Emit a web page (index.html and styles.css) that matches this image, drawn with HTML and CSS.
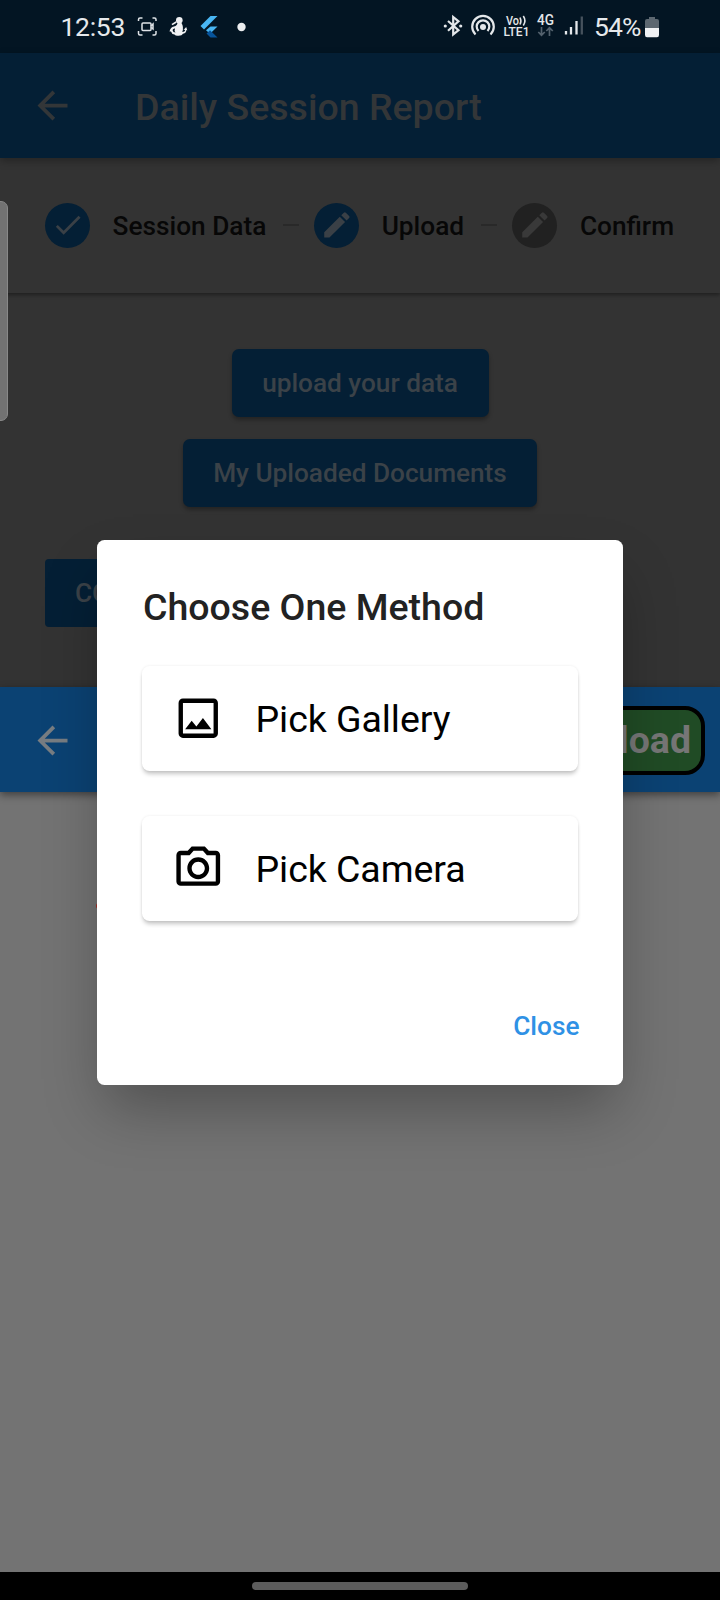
FILE: index.html
```html
<!DOCTYPE html>
<html lang="en">
<head>
<meta charset="utf-8">
<title>Daily Session Report</title>
<link rel="stylesheet" href="styles.css">
</head>
<body>
<div class="screen">
  <div class="status">
    <span class="clock">12:53</span>
    <svg class="status-icons-left" viewBox="0 0 115 26" width="115" height="26">
      <g fill="none" stroke="#dfe3e7" stroke-width="1.5">
        <path d="M1.5 6V4.500Q1.500 3 3 3H5.500M15.500 3H17.500Q19 3 19 4.500V6M19 16V18.500Q19 20 17.500 20H15.500M5.500 20H3Q1.500 20 1.500 18.500V16"/>
        <rect x="5" y="8" width="9" height="7.500" rx="1"/><path d="M14 11L16 9V14L14 12.500"/>
      </g>
      <g fill="#f0f1f3">
        <circle cx="42.300" cy="5.300" r="3.300"/>
        <path d="M40.500 7.500L44.500 8Q47 12 45.300 17Q48.500 16.500 48 14.800L46.500 15L49.200 12L50.300 15.500L49.300 15Q49.500 18 46 18.800Q45 21 41 20.800Q38.500 21 37.500 19.500Q34.500 19 34 16.500L32.500 16.500Q33.500 12 37 11.500Q40.500 10.500 40.500 7.500Z"/>
        <path d="M34.500 9L39.300 6L39.600 7.800L35.500 10.300Z"/>
      </g>
      <path d="M35.500 15Q36.500 13 38 13.500Q37 15.500 38.500 17.500Q36 17.500 35.500 15" fill="#041522"/>
      <path d="M73.500 1H80.500L67 14.500L63.500 11Z" fill="#49b6f3"/>
      <path d="M73.500 11.500H80.500L73 18.700L69 15.300Z" fill="#49b6f3"/>
      <path d="M69.500 18.500L73 15.300L80.500 22.500H73.500Z" fill="#07549b"/>
      <circle cx="104.500" cy="12" r="4.200" fill="#eceef0"/>
    </svg>
    <svg class="status-icons-right" viewBox="0 0 146 26" width="146" height="26">
      <g fill="none" stroke="#e4e7ea" stroke-width="2.200">
        <path d="M5 7L15.500 16.200L10.200 20.500V3L15.500 7.300L5 16.800"/>
        <path d="M32.500 20.500A10.800 10.800 0 1 1 47.500 20.500"/>
        <path d="M35.500 17A6.300 6.300 0 1 1 44.500 17"/>
      </g>
      <g fill="#e4e7ea"><circle cx="2.300" cy="12" r="1.600"/><circle cx="17.700" cy="12" r="1.600"/><circle cx="40" cy="13" r="3"/></g>
      <text x="63" y="10.500" class="tiny" textLength="13" lengthAdjust="spacingAndGlyphs">Vo</text>
      <path d="M77 3.500Q78.800 7 77 10.500M80.300 2Q83.500 6.800 80.300 11.500" fill="none" stroke="#e4e7ea" stroke-width="1.600"/>
      <text x="60.500" y="21.500" class="tiny" textLength="26" lengthAdjust="spacingAndGlyphs">LTE1</text>
      <text x="94" y="11" class="net" textLength="17" lengthAdjust="spacingAndGlyphs">4G</text>
      <path d="M98.500 13V21M95.300 18L98.500 21.200L101.800 18M106.500 22V14M103.300 17L106.500 13.800L109.800 17" fill="none" stroke="#53616d" stroke-width="1.700"/>
      <path d="M123 17V20.500M128 13V20.500M133.500 7V20.500" stroke="#e4e7ea" stroke-width="2.300"/>
      <path d="M138.800 2.500V20.500" stroke="#46525d" stroke-width="2.300"/>
    </svg>
    <span class="percent">54%</span>
    <svg class="battery" viewBox="0 0 14 22" width="14" height="22">
      <path d="M4 1H10V3H12Q14 3 14 5V12H0V5Q0 3 2 3H4Z" fill="#5c6770"/>
      <path d="M0 12H14V19Q14 21.300 12 21.300H2Q0 21.300 0 19Z" fill="#eff1f3"/>
    </svg>
  </div>

  <header class="appbar">
    <svg class="back" viewBox="0 0 24 24"><path d="M20 11H7.830l5.590-5.590L12 4l-8 8 8 8 1.410-1.410L7.830 13H20z"/></svg>
    <h1 class="appbar-title">Daily Session Report</h1>
  </header>

  <nav class="stepper">
    <span class="step-dot"><svg viewBox="0 0 24 24" class="ic-check"><path d="M9 16.170L4.830 12l-1.420 1.410L9 19 21 7l-1.410-1.410z"/></svg></span>
    <span class="step-label label-data">Session Data</span>
    <span class="step-line"></span>
    <span class="step-dot"><svg viewBox="0 0 24 24" class="ic-edit"><path d="M3 17.250V21h3.750L17.810 9.940l-3.750-3.750zM20.710 7.040a1 1 0 0 0 0-1.410l-2.340-2.340a1 1 0 0 0-1.410 0l-1.830 1.830 3.750 3.750z"/></svg></span>
    <span class="step-label label-upload">Upload</span>
    <span class="step-line"></span>
    <span class="step-dot idle"><svg viewBox="0 0 24 24" class="ic-edit"><path d="M3 17.250V21h3.750L17.810 9.940l-3.750-3.750zM20.710 7.040a1 1 0 0 0 0-1.410l-2.340-2.340a1 1 0 0 0-1.410 0l-1.830 1.830 3.750 3.750z"/></svg></span>
    <span class="step-label">Confirm</span>
  </nav>

  <main class="actions">
    <button class="btn btn-data">upload your data</button>
    <button class="btn btn-docs">My Uploaded Documents</button>
    <button class="btn btn-continue">CONTINUE</button>
  </main>

  <div class="subbar">
    <svg class="back" viewBox="0 0 24 24"><path d="M20 11H7.830l5.590-5.590L12 4l-8 8 8 8 1.410-1.410L7.830 13H20z"/></svg>
    <button class="upload">Upload</button>
  </div>
  <div class="body"><span class="marker"></span></div>
  <div class="navbar"><span class="home"></span></div>

  <div class="edge-handle"></div>

  <section class="dialog">
    <h2 class="dialog-title">Choose One Method</h2>
    <div class="option">
      <svg viewBox="0 0 24 24" class="option-icon"><path d="M19 5v14H5V5h14m0-2H5c-1.100 0-2 .9-2 2v14c0 1.100.9 2 2 2h14c1.100 0 2-.9 2-2V5c0-1.100-.9-2-2-2zM14.140 11.860l-3 3.870L9 13.140 6 17h12z"/></svg>
      <span class="option-label">Pick Gallery</span>
    </div>
    <div class="option">
      <svg viewBox="0 0 24 24" class="option-icon"><path d="M14.120 4l1.830 2H20v12H4V6h4.050l1.830-2h4.240M15 2H9L7.170 4H4c-1.100 0-2 .9-2 2v12c0 1.100.9 2 2 2h16c1.100 0 2-.9 2-2V6c0-1.100-.9-2-2-2h-3.170L15 2zm-3 7c1.650 0 3 1.350 3 3s-1.350 3-3 3-3-1.350-3-3 1.350-3 3-3m0-2c-2.760 0-5 2.240-5 5s2.240 5 5 5 5-2.240 5-5-2.240-5-5-5z"/></svg>
      <span class="option-label">Pick Camera</span>
    </div>
    <button class="close">Close</button>
  </section>
</div>
</body>
</html>
```
FILE: styles.css
```css
* { box-sizing: border-box; }
body { margin: 0; font-family: Roboto, "Liberation Sans", sans-serif; }
button { font: inherit; border: 0; margin: 0; padding: 0; }
svg { display: block; flex: none; }

.screen {
  position: relative;
  width: 720px;
  height: 1600px;
  overflow: hidden;
  display: flex;
  flex-direction: column;
  background: #333;
}

.status {
  flex: none;
  height: 52.500px;
  display: flex;
  align-items: center;
  padding-left: 60.500px;
  background: #031523;
  color: #e6e9ec;
  font-size: 26.500px;
  line-height: 52px;
  white-space: nowrap;
}
.clock { width: 76.500px; letter-spacing: -.3px; padding-top: 1px; }
.status-icons-left { margin-top: 3px; }
.status-icons-right { margin: 2px 0 0 191px; }
.percent { width: 48px; margin-left: 5px; padding-top: 1px; letter-spacing: -.9px; }
.battery { margin: 1px 0 0 3px; }
.tiny { font: 500 12px Roboto, sans-serif; fill: #e4e7ea; }
.net { font: 500 14px Roboto, sans-serif; fill: #e4e7ea; }

.appbar {
  position: relative;
  flex: none;
  height: 105px;
  display: flex;
  align-items: center;
  padding-left: 30px;
  background: #041f35;
  box-shadow: 0 3px 8px rgba(0, 0, 0, .3);
}
.back { width: 45px; height: 45px; fill: #333638; }
.appbar-title {
  margin: 0 0 0 60px;
  padding-top: 3px;
  font-size: 37.500px;
  font-weight: 500;
  color: #333638;
  white-space: nowrap;
}

.stepper {
  flex: none;
  height: 135.500px;
  display: flex;
  align-items: center;
  padding: 0 46px 0 45px;
  background: #333;
  box-shadow: 0 2px 4px rgba(0, 0, 0, .4);
}
.step-dot {
  flex: none;
  width: 45px;
  height: 45px;
  border-radius: 50%;
  display: grid;
  place-items: center;
  background: #041f35;
  fill: #3a4046;
}
.step-dot.idle { background: #212121; fill: #393939; }
.ic-check,
.ic-edit { width: 33.750px; height: 33.750px; }
.step-label {
  flex: none;
  margin-left: 22.500px;
  padding-top: 1px;
  font-size: 26.250px;
  font-weight: 500;
  color: #070707;
  white-space: nowrap;
}
.label-data { width: 154px; }
.label-upload { width: 83px; }
.step-line { flex: 1; height: 2px; margin: 0 15px 0 16px; background: #292929; }

.actions {
  flex: none;
  height: 394px;
  display: flex;
  flex-direction: column;
  align-items: center;
  padding: 56px 45px 0;
}
.btn {
  height: 67.500px;
  border-radius: 7px;
  background: #041f35;
  color: #3b4248;
  font-size: 26.250px;
  font-weight: 500;
  letter-spacing: -.03px;
  white-space: nowrap;
  box-shadow: 0 3px 4px rgba(0, 0, 0, .3);
}
.btn-data { width: 257px; }
.btn-docs { width: 354px; margin-top: 22.500px; }
.btn-continue {
  align-self: flex-start;
  width: 185px;
  margin-top: 52.500px;
  border-radius: 4px;
  padding-left: 30px;
  text-align: left;
  box-shadow: none;
}

.subbar {
  position: relative;
  flex: none;
  height: 105px;
  display: flex;
  align-items: center;
  justify-content: space-between;
  padding: 1px 15px 0 30px;
  background: #0b4273;
  box-shadow: 0 3px 8px rgba(0, 0, 0, .45);
}
.subbar .back { fill: #787d82; }
.upload {
  height: 69px;
  border: 4px solid #000;
  border-radius: 20px;
  padding: 0 10px;
  background: #204b25;
  color: #767676;
  font-size: 37.500px;
  font-weight: 700;
  line-height: 61px;
}

.body { flex: 1; background: #737373; padding: 111px 0 0 96px; }
.marker { display: block; width: 6px; height: 6px; border-radius: 50%; background: #a32b24; }
.navbar { flex: none; height: 28px; background: #000; display: flex; justify-content: center; padding-top: 10px; }
.home { width: 216px; height: 8px; border-radius: 4px; background: #5c5c5c; }

.edge-handle {
  position: absolute;
  left: -3px;
  top: 201px;
  width: 11px;
  height: 220px;
  border: 1px solid #888;
  border-radius: 0 7px 7px 0;
  background: #727272;
}

.dialog {
  position: absolute;
  left: 97px;
  top: 539.500px;
  width: 525.500px;
  height: 545.500px;
  padding: 45px;
  display: flex;
  flex-direction: column;
  border-radius: 7.500px;
  background: #fff;
  box-shadow: 0 30px 56px -8px rgba(0, 0, 0, .3);
}
.dialog-title {
  margin: 0 0 36px;
  padding-left: 1px;
  font-size: 37.500px;
  line-height: 45px;
  font-weight: 500;
  color: #222;
  white-space: nowrap;
}
.option {
  flex: none;
  height: 105px;
  margin-bottom: 45px;
  display: flex;
  align-items: center;
  gap: 31px;
  padding-left: 30px;
  border-radius: 7.500px;
  background: #fff;
  box-shadow: 0 4px 4px -1px rgba(0, 0, 0, .22), 0 0 3px rgba(0, 0, 0, .08);
  font-size: 37.500px;
  color: #000;
  white-space: nowrap;
}
.option-icon { width: 52.500px; height: 52.500px; }
.option-label { padding-top: 2px; letter-spacing: -.05px; }
.close {
  align-self: flex-end;
  margin: 25px -2px 0 0;
  background: none;
  font-size: 26.250px;
  line-height: 70px;
  font-weight: 500;
  color: #2f91e5;
}
```
